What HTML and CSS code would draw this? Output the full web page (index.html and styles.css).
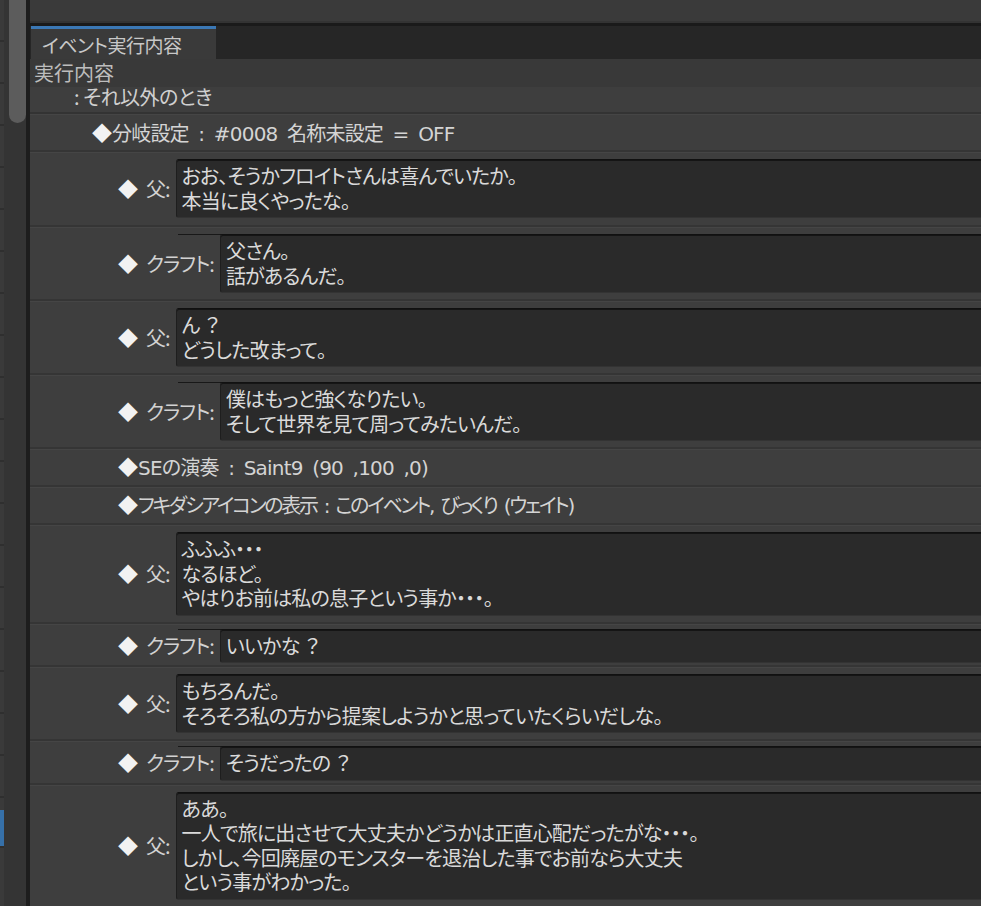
FILE: index.html
```html
<!DOCTYPE html>
<html lang="ja">
<head>
    <meta charset="UTF-8">
    <meta name="viewport" content="width=device-width, initial-scale=1.0">
    <title>イベント実行内容</title>
    <link rel="stylesheet" href="styles.css">
</head>
<body>
    <div class="window">
        <div class="sidebar">
            <div class="strip">
                <div class="strip-list"></div>
                <div class="strip-selected"></div>
                <div class="strip-rest"></div>
            </div>
            <div class="track">
                <div class="thumb"></div>
            </div>
        </div>
        <div class="divider"></div>

        <div class="main">
            <div class="toolbar"></div>
            <div class="tabs">
                <div class="tab">イベント実行内容</div>
            </div>

            <div class="content">
                <div class="caption">実行内容</div>
                <div class="cond">: それ以外のとき</div>

                <div class="cmd branch"><span class="dia">◆</span>分岐設定 : #0008 名称未設定 = OFF</div>

                <div class="msg first">
                    <span class="label"><span class="dia">◆</span>父:</span>
                    <div class="box">おお、そうかフロイトさんは喜んでいたか。<br>本当に良くやったな。</div>
                </div>
                <div class="msg">
                    <span class="label"><span class="dia">◆</span>クラフト:</span>
                    <div class="box">父さん。<br>話があるんだ。</div>
                </div>
                <div class="msg">
                    <span class="label"><span class="dia">◆</span>父:</span>
                    <div class="box">ん<span class="fw">？</span><br>どうした改まって。</div>
                </div>
                <div class="msg">
                    <span class="label"><span class="dia">◆</span>クラフト:</span>
                    <div class="box">僕はもっと強くなりたい。<br>そして世界を見て周ってみたいんだ。</div>
                </div>

                <div class="cmd"><span class="dia">◆</span>SEの演奏 : Saint9 (90 ,100 ,0)</div>
                <div class="cmd kana"><span class="dia">◆</span>フキダシアイコンの表示 : このイベント, びっくり (ウェイト)</div>

                <div class="msg tall">
                    <span class="label"><span class="dia">◆</span>父:</span>
                    <div class="box">ふふふ・・・<br>なるほど。<br>やはりお前は私の息子という事か・・・。</div>
                </div>
                <div class="msg single">
                    <span class="label"><span class="dia">◆</span>クラフト:</span>
                    <div class="box">いいかな<span class="fw">？</span></div>
                </div>
                <div class="msg">
                    <span class="label"><span class="dia">◆</span>父:</span>
                    <div class="box">もちろんだ。<br>そろそろ私の方から提案しようかと思っていたくらいだしな。</div>
                </div>
                <div class="msg single">
                    <span class="label"><span class="dia">◆</span>クラフト:</span>
                    <div class="box">そうだったの<span class="fw">？</span></div>
                </div>
                <div class="msg">
                    <span class="label"><span class="dia">◆</span>父:</span>
                    <div class="box">ああ。<br>一人で旅に出させて大丈夫かどうかは正直心配だったがな・・・。<br>しかし、今回廃屋のモンスターを退治した事でお前なら大丈夫<br>という事がわかった。</div>
                </div>
            </div>
        </div>
    </div>
</body>
</html>
```

FILE: styles.css
```css
body {
    margin: 0;
    background: #3a3a3a;
    font-family: "Noto Sans CJK JP", "Noto Sans", sans-serif;
    font-feature-settings: "palt";
    color: #d4d4d4;
    overflow: hidden;
}

.window {
    display: flex;
    width: 981px;
    height: 906px;
    overflow: hidden;
}

/* 左のリスト */
.sidebar {
    width: 26px;
    flex-shrink: 0;
    display: flex;
}

.strip {
    width: 4px;
    display: flex;
    flex-direction: column;
    background: #3a3a3a;
}

.strip-list {
    height: 810px;
    background: repeating-linear-gradient(to bottom, #3a3a3a 0 40px, #2f2f2f 40px 42px);
}

.strip-selected {
    height: 36px;
    background: #3670a8;
}

.strip-rest {
    flex: 1;
    border-top: 2px solid #2f2f2f;
}

.track {
    width: 22px;
    background: #343434;
}

.thumb {
    margin-left: 5px;
    width: 17px;
    height: 123px;
    background: #5c5c5c;
    border-radius: 0 0 9px 9px;
}

.divider {
    width: 4px;
    flex-shrink: 0;
    background: #1d1d1d;
}

.main {
    flex: 1;
    min-width: 0;
    overflow: hidden;
}

.toolbar {
    height: 21px;
    background: #3a3a3a;
    border-bottom: 2px solid #333;
}

.tabs {
    height: 33px;
    border-top: 3px solid #1a1a1a;
    background: #262626;
    display: flex;
}

.tab {
    margin-left: 1px;
    width: 174px;
    padding-left: 11px;
    background: #3a3a3a;
    border-top: 3px solid #3b78b5;
    font-size: 19px;
    line-height: 31px;
    letter-spacing: -0.5px;
    color: #c8c8c8;
    white-space: nowrap;
}

/* 実行内容 */
.caption {
    height: 28px;
    line-height: 28px;
    padding-left: 4px;
    background: #393939;
    font-size: 20px;
    color: #bdbdbd;
}

.cond {
    height: 24px;
    padding-top: 1px;
    line-height: 18px;
    padding-left: 44px;
    background: #3e3e3e;
    border-bottom: 2px solid #333;
    font-size: 20px;
    letter-spacing: -0.5px;
    color: #d0d0d0;
}

.cmd {
    background: #3e3e3e;
    border-top: 1px solid #454545;
    border-bottom: 2px solid #353535;
    padding: 5px 0 5px 88px;
    font-family: "DejaVu Sans", "Noto Sans CJK JP", sans-serif;
    font-size: 20px;
    line-height: 24px;
    letter-spacing: -0.8px;
    word-spacing: 4px;
    white-space: nowrap;
}

.cmd.branch {
    padding: 6px 0 4px 62px;
}

.cmd.kana {
    letter-spacing: -2.3px;
    word-spacing: 3px;
}

.msg {
    position: relative;
    display: flex;
    align-items: center;
    background: #3e3e3e;
    border-top: 1px solid #454545;
    border-bottom: 2px solid #353535;
    padding: 6px 0 6px 88px;
}

.msg.first {
    padding-bottom: 7px;
}

.msg.tall {
    padding-bottom: 6px;
}

.msg.single {
    padding: 4px 0 2px 88px;
}

.msg::before {
    content: '';
    position: absolute;
    left: 148px;
    right: 0;
    top: 6px;
    height: 1px;
    background: #181818;
}

.msg.single::before {
    top: 4px;
}

.label {
    flex-shrink: 0;
    margin-right: 6px;
    font-size: 20px;
    line-height: 24px;
    letter-spacing: -1px;
    color: #d2d2d2;
    white-space: nowrap;
}

.dia {
    font-family: "Noto Sans CJK JP", sans-serif;
    color: #f2f2f2;
    letter-spacing: 0;
}

.label .dia {
    margin-right: 8px;
}

.box {
    position: relative;
    flex: 1;
    background: #2a2a2a;
    border: 1px solid #1e1e1e;
    border-top-color: #111;
    border-bottom-color: #333;
    border-right: none;
    border-radius: 3px 0 0 3px;
    box-shadow: inset 0 1px 0 #151515;
    padding: 4px 5px;
    font-size: 20px;
    line-height: 24.5px;
    letter-spacing: -0.8px;
    color: #dadada;
    white-space: nowrap;
}

.fw {
    font-feature-settings: normal;
    margin-left: 3px;
}
```
